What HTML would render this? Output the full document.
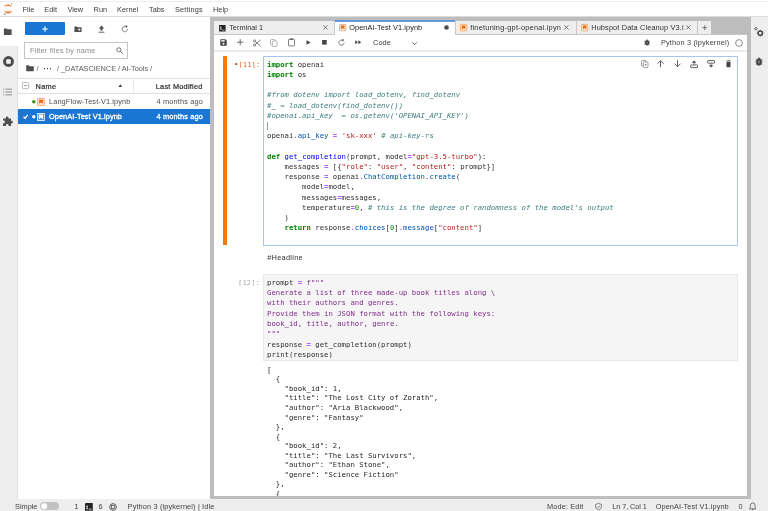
<!DOCTYPE html>
<html lang="en">
<head>
<meta charset="utf-8">
<title>JupyterLab</title>
<style>
*{box-sizing:border-box;margin:0;padding:0}
html,body{width:768px;height:511px;overflow:hidden;background:#fff}
body{position:relative;font-family:"Liberation Sans",sans-serif;font-size:7.35px;color:#212121;line-height:10px}
.a{position:absolute;white-space:pre}
.t{position:absolute;white-space:pre;line-height:10px;height:10px}
svg{position:absolute;overflow:visible}
#w{position:absolute;left:0;top:0;width:768px;height:511px;will-change:transform}
.mono{font-family:"DejaVu Sans Mono","Liberation Mono",monospace;font-size:7.29px}
.code{position:absolute;white-space:pre;font-family:"DejaVu Sans Mono","Liberation Mono",monospace;font-size:14.58px;line-height:20.4px;color:#303030;transform:scale(0.5);transform-origin:0 0}
.out{position:absolute;white-space:pre;font-family:"DejaVu Sans Mono","Liberation Mono",monospace;font-size:14.58px;line-height:19.2px;color:#2a2a2a;transform:scale(0.5);transform-origin:0 0}
.k{color:#008000;font-weight:bold}
.c{color:#408080;font-style:italic}
.s{color:#ba2121}
.o{color:#b660ff;font-weight:bold}
.p{color:#0055aa}
.d{color:#0000ff}
.n{color:#008800}
.f{color:#85308f}
.u{text-shadow:0 0.9px 0 currentColor}
</style>
</head>
<body>
<div id="w">
<!-- top menu bar -->
<div class="a" id="menubar" style="left:-4px;top:-4px;width:776px;height:20.6px;background:#fff;border-bottom:1px solid #dcdcdc"></div><div class="a" style="left:-4px;top:1.2px;width:776px;height:1px;background:#ececec"></div>
<svg style="left:0;top:0" width="17" height="17" viewBox="0 0 17 17">
  <path d="M4.3 7.3 C5.2 3.4 11.2 3.4 12.1 7.3 C10.4 5.7 6 5.7 4.3 7.3Z" fill="#f37726"/>
  <path d="M4.3 10.4 C5.2 14.4 11.2 14.4 12.1 10.4 C10.4 12 6 12 4.3 10.4Z" fill="#f37726"/>
  <circle cx="4.9" cy="14.1" r="0.75" fill="#616262"/>
  <circle cx="11.6" cy="3.8" r="0.6" fill="#767677"/>
  <circle cx="4.4" cy="5" r="0.45" fill="#9e9e9e"/>
</svg>
<span class="t" style="left:22.6px;top:4.6px;color:#3a3a3a">File</span>
<span class="t" style="left:44.3px;top:4.6px;color:#3a3a3a">Edit</span>
<span class="t" style="left:67.4px;top:4.6px;color:#3a3a3a">View</span>
<span class="t" style="left:93.6px;top:4.6px;color:#3a3a3a">Run</span>
<span class="t" style="left:117px;top:4.6px;color:#3a3a3a">Kernel</span>
<span class="t" style="left:149px;top:4.6px;color:#3a3a3a">Tabs</span>
<span class="t" style="left:175px;top:4.6px;color:#3a3a3a;letter-spacing:0.15px">Settings</span>
<span class="t" style="left:213px;top:4.6px;color:#3a3a3a">Help</span>

<!-- left sidebar -->
<div class="a" id="lside" style="left:-4px;top:16.5px;width:21.5px;height:482.5px;background:#eeeeee"></div>
<div class="a" style="left:16.5px;top:46px;width:1px;height:453px;background:#dfdfdf"></div><div class="a" style="left:-4px;top:16.5px;width:22px;height:29.5px;background:#fff"></div>
<svg style="left:3.3px;top:28.1px" width="9.5" height="7.4" viewBox="0 0 10 9"><path d="M0.3 1.2 Q0.3 0.5 1 0.5 H3.6 L4.6 1.6 H9 Q9.7 1.6 9.7 2.3 V7.8 Q9.7 8.5 9 8.5 H1 Q0.3 8.5 0.3 7.8Z" fill="#4f4f4f"/></svg>
<svg style="left:2.6px;top:56.4px" width="11" height="11" viewBox="0 0 11 11"><circle cx="5.5" cy="5.5" r="5.4" fill="#4a4a4a"/><rect x="3.2" y="3.2" width="4.6" height="4.6" rx="0.9" fill="#f4f4f4"/></svg>
<svg style="left:3.3px;top:87.8px" width="9.4" height="8" viewBox="0 0 10 8"><g stroke="#868686" stroke-width="1"><path d="M0.2 1H1.4M2.6 1H9.6M0.2 4H1.4M2.6 4H9.6M0.2 7H1.4M2.6 7H9.6"/></g></svg>
<svg style="left:1.85px;top:115.8px" width="10.5" height="10.5" viewBox="0 0 10 10"><path d="M3.6 1.7 A1.3 1.3 0 0 1 6.2 1.7 V2.4 H8 Q8.6 2.4 8.6 3 V4.6 H9 A1.3 1.3 0 0 1 9 7.2 H8.6 V9 Q8.6 9.6 8 9.6 H6.3 V9 A1.3 1.3 0 0 0 3.7 9 V9.6 H1.6 Q1 9.6 1 9 V7 H1.5 A1.3 1.3 0 0 0 1.5 4.4 H1 V3 Q1 2.4 1.6 2.4 H3.6Z" fill="#4f4f4f"/></svg>

<!-- file browser -->
<div class="a" id="fb" style="left:18px;top:16.5px;width:192px;height:482.5px;background:#fff"></div>
<div class="a" style="left:24.6px;top:22px;width:40px;height:13px;background:#1976d2;border-radius:1px"></div>
<svg style="left:41.6px;top:25.6px" width="6" height="6" viewBox="0 0 6 6"><path d="M3 0.2V5.8M0.2 3H5.8" stroke="#fff" stroke-width="1.1"/></svg>
<svg style="left:73.6px;top:25.5px" width="8" height="6.6" viewBox="0 0 8 7"><path d="M0.2 0.9 Q0.2 0.4 0.7 0.4 H2.8 L3.6 1.3 H7.3 Q7.8 1.3 7.8 1.8 V6 Q7.8 6.5 7.3 6.5 H0.7 Q0.2 6.5 0.2 6Z" fill="#4f4f4f"/><path d="M5.3 2.5V5.3M3.9 3.9H6.7" stroke="#fff" stroke-width="0.8"/></svg>
<svg style="left:97.5px;top:25px" width="7" height="8" viewBox="0 0 7 8"><path d="M3.5 0.4 L6.2 3.4 H4.6 V5.6 H2.4 V3.4 H0.8Z" fill="#4f4f4f"/><path d="M0.6 7.2H6.4" stroke="#4f4f4f" stroke-width="0.9"/></svg>
<svg style="left:120.6px;top:25px" width="8" height="8" viewBox="0 0 8 8"><path d="M6.6 4.2 A2.7 2.7 0 1 1 5.4 1.8" fill="none" stroke="#616161" stroke-width="0.8"/><path d="M4.3 0.2 L6.9 0.9 L5.2 3Z" fill="#616161"/></svg>

<div class="a" style="left:24.2px;top:42px;width:103.6px;height:17px;border:1px solid #c4c4c4;background:#fff"></div>
<span class="t" style="left:30px;top:45.7px;color:#8c8c8c;letter-spacing:0.2px">Filter files by name</span>
<svg style="left:116px;top:47.2px" width="7.4" height="7.4" viewBox="0 0 7 7"><circle cx="2.7" cy="2.7" r="2" fill="none" stroke="#616161" stroke-width="0.8"/><path d="M4.2 4.2L6.5 6.5" stroke="#616161" stroke-width="0.9"/></svg>

<svg style="left:25.8px;top:65.3px" width="8" height="6.5" viewBox="0 0 8 6.5"><path d="M0.2 0.8 Q0.2 0.3 0.7 0.3 H2.8 L3.6 1.2 H7.3 Q7.8 1.2 7.8 1.7 V5.7 Q7.8 6.2 7.3 6.2 H0.7 Q0.2 6.2 0.2 5.7Z" fill="#4f4f4f"/></svg>
<span class="t" style="left:36.5px;top:63.7px;color:#616161">/</span>
<span class="t" style="left:43.6px;top:63.7px;color:#424242;letter-spacing:0.5px;font-weight:bold">···</span>
<span class="t" style="left:57px;top:63.7px;color:#5c5c5c;letter-spacing:-0.02px">/ _DATASCIENCE / AI-Tools /</span>

<div class="a" style="left:18px;top:78px;width:192px;height:15.5px;border-top:1px solid #e0e0e0;border-bottom:1px solid #e0e0e0;background:#fff"></div>
<div class="a" style="left:133px;top:79.5px;width:1px;height:13px;background:#e8e8e8"></div>
<svg style="left:22px;top:82.4px" width="7" height="7" viewBox="0 0 7 7"><rect x="0.4" y="0.4" width="6.2" height="6.2" rx="0.8" fill="#fff" stroke="#9e9e9e" stroke-width="0.7"/><path d="M1.9 3.5H5.1" stroke="#757575" stroke-width="0.7"/></svg>
<span class="t" style="left:35.6px;top:81.7px;color:#2b2b2b;-webkit-text-stroke:0.2px #2b2b2b;letter-spacing:0.3px">Name</span>
<svg style="left:118.2px;top:84.3px" width="4.6" height="3.2" viewBox="0 0 4 3"><path d="M2 0.3L3.8 2.8H0.2Z" fill="#424242"/></svg>
<span class="t" style="left:155.8px;top:81.7px;color:#2b2b2b;-webkit-text-stroke:0.2px #2b2b2b;letter-spacing:0.24px">Last Modified</span>

<!-- row 1 -->
<svg style="left:31.5px;top:99.9px" width="3.6" height="3.6" viewBox="0 0 3 3"><circle cx="1.5" cy="1.5" r="1.4" fill="#2e8b2e"/></svg>
<svg style="left:37px;top:98px" width="7.9" height="7.8" viewBox="0 0 7.6 7.8"><rect x="0.4" y="0.4" width="6.8" height="7" rx="0.5" fill="#fdeadb" stroke="#f28a45" stroke-width="0.7"/><path d="M1.9 1.7H5.7V5.7L3.8 4.6L1.9 5.7Z" fill="#f06a08"/></svg>
<span class="t" style="left:49px;top:97.3px;color:#4d4d4d;letter-spacing:0.12px">LangFlow-Test-V1.ipynb</span>
<span class="t" style="left:156.5px;top:97.3px;color:#4d4d4d;letter-spacing:0.16px">4 months ago</span>
<!-- row 2 -->
<div class="a" style="left:18px;top:109px;width:192px;height:15px;background:#1976d2"></div>
<svg style="left:22.6px;top:114.4px" width="5.4" height="5.2" viewBox="0 0 6.4 6"><path d="M0.7 3.2L2.4 4.9L5.7 0.9" fill="none" stroke="#fff" stroke-width="1.5"/></svg>
<svg style="left:31.5px;top:115.1px" width="3.6" height="3.6" viewBox="0 0 3 3"><circle cx="1.5" cy="1.5" r="1.4" fill="#fff"/></svg>
<svg style="left:37px;top:112.9px" width="7.9" height="7.8" viewBox="0 0 7.6 7.8"><rect x="0.4" y="0.4" width="6.8" height="7" fill="#4a92dc" stroke="#fff" stroke-width="0.8"/><path d="M1.7 1.6H5.9V6.2L3.8 4.7L1.7 6.2Z" fill="#fff"/></svg>
<span class="t" style="left:49px;top:112.1px;color:#fff;-webkit-text-stroke:0.3px #fff;letter-spacing:0.08px">OpenAI-Test V1.ipynb</span>
<span class="t" style="left:156.5px;top:112.1px;color:#fff;-webkit-text-stroke:0.3px #fff;letter-spacing:0.16px">4 months ago</span>

<!-- main dock -->
<div class="a" id="dockbg" style="left:210px;top:16.5px;width:541px;height:482.5px;background:#bdbdbd"></div>
<div class="a" id="dock" style="left:214px;top:34.5px;width:533px;height:462px;background:#fff"></div>
<!-- tabs -->
<div class="a" style="left:214px;top:20.5px;width:121px;height:14px;background:#eeeeee;border-right:1px solid #c8c8c8;border-bottom:1px solid #c8c8c8"></div>
<div class="a" style="left:335px;top:20.5px;width:121px;height:14px;background:#fff;border-right:1px solid #c8c8c8"></div><svg style="left:335px;top:19px" width="120" height="4" viewBox="0 0 120 4"><rect x="0" y="1.3" width="120" height="1.5" fill="#3f87da"/></svg>
<div class="a" style="left:456px;top:20.5px;width:121px;height:14px;background:#eeeeee;border-right:1px solid #c8c8c8;border-bottom:1px solid #c8c8c8"></div>
<div class="a" style="left:577px;top:20.5px;width:121px;height:14px;background:#eeeeee;border-right:1px solid #c8c8c8;border-bottom:1px solid #c8c8c8"></div>
<div class="a" style="left:698px;top:20.5px;width:13px;height:14px;background:#eeeeee;border-bottom:1px solid #c8c8c8"></div>
<div class="a" style="left:711px;top:33.5px;width:36px;height:1px;background:#c8c8c8"></div>

<svg style="left:219.4px;top:24.5px" width="6.7" height="6.5" viewBox="0 0 7 7"><rect x="0" y="0" width="7" height="7" rx="0.4" fill="#222"/><path d="M1.9 1.4V5.6M2.7 2.4Q1.9 1.8 1.2 2.4Q1 3.2 1.9 3.5Q2.8 3.8 2.6 4.6Q1.9 5.2 1.1 4.6" stroke="#fff" stroke-width="0.5" fill="none"/><path d="M3.6 5.5H5.8" stroke="#fff" stroke-width="0.7"/></svg>
<span class="t" style="left:229.2px;top:22.7px;color:#333">Terminal 1</span>
<svg style="left:322.9px;top:25.3px" width="4.8" height="4.8" viewBox="0 0 4.8 4.8"><path d="M0.3 0.3L4.5 4.5M4.5 0.3L0.3 4.5" stroke="#555" stroke-width="0.75"/></svg>

<svg style="left:339.4px;top:23.9px" width="7.3" height="7.2" viewBox="0 0 7.6 7.8"><rect x="0.4" y="0.4" width="6.8" height="7" rx="0.5" fill="#fdeadb" stroke="#f28a45" stroke-width="0.7"/><path d="M1.9 1.7H5.7V5.7L3.8 4.6L1.9 5.7Z" fill="#f06a08"/></svg>
<span class="t" style="left:349.2px;top:22.7px;color:#212121;letter-spacing:0.08px">OpenAI-Test V1.ipynb</span>
<svg style="left:443.6px;top:25.3px" width="5" height="5" viewBox="0 0 5 5"><circle cx="2.5" cy="2.5" r="2.3" fill="#4a4a4a"/></svg>

<svg style="left:460.4px;top:23.9px" width="7.3" height="7.2" viewBox="0 0 7.6 7.8"><rect x="0.4" y="0.4" width="6.8" height="7" rx="0.5" fill="#fdeadb" stroke="#f28a45" stroke-width="0.7"/><path d="M1.9 1.7H5.7V5.7L3.8 4.6L1.9 5.7Z" fill="#f06a08"/></svg>
<span class="t" style="left:470.2px;top:22.7px;color:#333;letter-spacing:0.25px">finetuning-gpt-openai.ipyn</span>
<svg style="left:564.4px;top:25.3px" width="4.8" height="4.8" viewBox="0 0 4.8 4.8"><path d="M0.3 0.3L4.5 4.5M4.5 0.3L0.3 4.5" stroke="#555" stroke-width="0.75"/></svg>

<svg style="left:581.4px;top:23.9px" width="7.3" height="7.2" viewBox="0 0 7.6 7.8"><rect x="0.4" y="0.4" width="6.8" height="7" rx="0.5" fill="#fdeadb" stroke="#f28a45" stroke-width="0.7"/><path d="M1.9 1.7H5.7V5.7L3.8 4.6L1.9 5.7Z" fill="#f06a08"/></svg>
<span class="t" style="left:591.2px;top:22.7px;color:#333;letter-spacing:0.14px">Hubspot Data Cleanup V3.i</span>
<svg style="left:685.6px;top:25.3px" width="4.8" height="4.8" viewBox="0 0 4.8 4.8"><path d="M0.3 0.3L4.5 4.5M4.5 0.3L0.3 4.5" stroke="#555" stroke-width="0.75"/></svg>
<svg style="left:701.8px;top:24.8px" width="5.4" height="5.4" viewBox="0 0 6 6"><path d="M3 0.2V5.8M0.2 3H5.8" stroke="#555" stroke-width="0.8"/></svg>

<!-- notebook toolbar -->
<div class="a" style="left:214px;top:35px;width:533px;height:16px;background:#fff"></div><div class="a" style="left:214px;top:50px;width:533px;height:1px;background:#d8d8d8;transform:translateY(0.45px)"></div>
<svg style="left:220.2px;top:39px" width="7" height="7" viewBox="0 0 7 7"><path d="M0.3 0.9Q0.3 0.3 0.9 0.3H5.4L6.7 1.6V6.1Q6.7 6.7 6.1 6.7H0.9Q0.3 6.7 0.3 6.1Z" fill="#424242"/><rect x="1.3" y="1.1" width="3.4" height="1.5" fill="#fff"/><circle cx="3.5" cy="4.7" r="1" fill="#fff"/></svg>
<svg style="left:237.3px;top:39.4px" width="6.4" height="6.4" viewBox="0 0 6 6"><path d="M3 0.1V5.9M0.1 3H5.9" stroke="#555" stroke-width="0.8"/></svg>
<svg style="left:253.2px;top:38.5px" width="8" height="8" viewBox="0 0 8 8"><path d="M2.4 2.6L7.6 7.2M2.4 5.4L7.6 0.8" stroke="#616161" stroke-width="0.8" fill="none"/><circle cx="1.6" cy="1.9" r="1.1" fill="none" stroke="#616161" stroke-width="0.8"/><circle cx="1.6" cy="6.1" r="1.1" fill="none" stroke="#616161" stroke-width="0.8"/></svg>
<svg style="left:270.3px;top:38.8px" width="7.6" height="8" viewBox="0 0 7.6 8"><rect x="0.5" y="0.5" width="4.4" height="5.6" rx="0.9" fill="none" stroke="#9a9a9a" stroke-width="0.7"/><rect x="2.4" y="1.9" width="4.6" height="5.7" rx="0.9" fill="#fff" stroke="#9a9a9a" stroke-width="0.7"/></svg>
<svg style="left:287.8px;top:38.2px" width="7" height="8.4" viewBox="0 0 7 8.4"><rect x="0.5" y="1.3" width="6" height="6.6" rx="0.6" fill="none" stroke="#616161" stroke-width="0.8"/><rect x="2.2" y="0.3" width="2.6" height="1.7" fill="#616161"/></svg>
<svg style="left:306px;top:40px" width="5" height="5" viewBox="0 0 5 5"><path d="M0.5 0.2L4.6 2.5L0.5 4.8Z" fill="#424242"/></svg>
<svg style="left:322.2px;top:40.2px" width="4.8" height="4.6" viewBox="0 0 4.4 4.4"><rect width="4.4" height="4.4" fill="#424242"/></svg>
<svg style="left:337.9px;top:38.9px" width="7.2" height="7.2" viewBox="0 0 7 7"><path d="M5.9 3.7A2.5 2.5 0 1 1 4.8 1.5" fill="none" stroke="#616161" stroke-width="0.8"/><path d="M3.8 0L6.2 0.7L4.6 2.6Z" fill="#616161"/></svg>
<svg style="left:355.4px;top:40.3px" width="6.5" height="4.4" viewBox="0 0 6.5 4.4"><path d="M0.2 0.2L3 2.2L0.2 4.2ZM3.4 0.2L6.2 2.2L3.4 4.2Z" fill="#424242"/></svg>
<span class="t" style="left:373px;top:37.7px;color:#3a3a3a;letter-spacing:0.1px">Code</span>
<svg style="left:411.6px;top:41.6px" width="5.2" height="3.2" viewBox="0 0 5 3"><path d="M0.4 0.4L2.5 2.5L4.6 0.4" fill="none" stroke="#555" stroke-width="0.9"/></svg>

<svg style="left:644.4px;top:39.3px" width="6.2" height="7" viewBox="0 0 8 9"><path d="M0.6 2.6L2 3.4M7.4 2.6L6 3.4M0.3 4.9H1.8M7.7 4.9H6.2M0.6 7.4L2 6.4M7.4 7.4L6 6.4" stroke="#424242" stroke-width="0.9"/><ellipse cx="4" cy="4.9" rx="2.7" ry="3.6" fill="#424242"/><path d="M2.6 1.4Q4 -0.4 5.4 1.4Z" fill="#424242"/><rect x="3.3" y="3.6" width="1.4" height="2.6" rx="0.6" fill="#8a8a8a"/></svg>
<span class="t" style="left:661px;top:37.7px;color:#424242;letter-spacing:0.15px">Python 3 (ipykernel)</span>
<svg style="left:735px;top:38.6px" width="8" height="8" viewBox="0 0 8 8"><circle cx="4" cy="4" r="3.4" fill="none" stroke="#616161" stroke-width="0.7"/></svg>

<!-- cell 1 -->
<div class="a" style="left:222.8px;top:56.3px;width:4.4px;height:188.9px;background:#f57c00;border-radius:0.5px"></div>
<span class="code" style="left:233.7px;top:59.4px;line-height:20.45px;color:#e2652a"><span style="color:#d03a1a">•</span>[11]:</span>
<div class="a" style="left:263px;top:56.2px;width:475.4px;height:189.6px;border:1px solid #a9c6ea;background:#fff"></div>
<div class="code" style="left:267.2px;top:59.4px;line-height:20.45px"><span class="k">import</span> openai
<span class="k">import</span> os

<span class="c">#from dotenv import load<span class="u">_</span>dotenv, find<span class="u">_</span>dotenv</span>
<span class="c">#<span class="u">_</span> = load<span class="u">_</span>dotenv(find<span class="u">_</span>dotenv())</span>
<span class="c">#openai.api<span class="u">_</span>key  = os.getenv('OPENAI<span class="u">_</span>API<span class="u">_</span>KEY')</span>

openai<span class="o">.</span><span class="p">api<span class="u">_</span>key</span> <span class="o">=</span> <span class="s">'sk-xxx'</span> <span class="c"># api-key-rs</span>

<span class="k">def</span> <span class="d">get<span class="u">_</span>completion</span>(prompt, model<span class="o">=</span><span class="s">"gpt-3.5-turbo"</span>):
    messages <span class="o">=</span> [{<span class="s">"role"</span>: <span class="s">"user"</span>, <span class="s">"content"</span>: prompt}]
    response <span class="o">=</span> openai<span class="o">.</span><span class="p">ChatCompletion</span><span class="o">.</span><span class="p">create</span>(
        model<span class="o">=</span>model,
        messages<span class="o">=</span>messages,
        temperature<span class="o">=</span><span class="n">0</span>, <span class="c"># this is the degree of randomness of the model's output</span>
    )
    <span class="k">return</span> response<span class="o">.</span><span class="p">choices</span>[<span class="n">0</span>]<span class="o">.</span><span class="p">message</span>[<span class="s">"content"</span>]</div>
<div class="a" style="left:266.6px;top:121.8px;width:1px;height:8.6px;background:#9a9a9a"></div>

<!-- cell toolbar -->
<svg style="left:640.6px;top:60px" width="7.6" height="8" viewBox="0 0 7.6 8"><rect x="0.5" y="0.5" width="4.4" height="5.6" rx="0.9" fill="none" stroke="#757575" stroke-width="0.7"/><rect x="2.4" y="1.9" width="4.6" height="5.7" rx="0.9" fill="#fff" stroke="#757575" stroke-width="0.7"/><path d="M4.7 3.6V5.8M3.6 4.7H5.8" stroke="#757575" stroke-width="0.6"/></svg>
<svg style="left:657.3px;top:60.3px" width="7" height="7.4" viewBox="0 0 7 7.4"><path d="M3.5 7.2V0.8M0.5 3.7L3.5 0.7L6.5 3.7" fill="none" stroke="#555" stroke-width="0.95"/></svg>
<svg style="left:674.3px;top:60.3px" width="7" height="7.4" viewBox="0 0 7 7.4"><path d="M3.5 0.2V6.6M0.5 3.7L3.5 6.7L6.5 3.7" fill="none" stroke="#555" stroke-width="0.95"/></svg>
<svg style="left:690.4px;top:60px" width="8.2" height="8" viewBox="0 0 7.4 7.4"><rect x="0.5" y="4.6" width="6.4" height="2.4" rx="0.5" fill="none" stroke="#555" stroke-width="0.85"/><path d="M3.7 4.4V1.2M2.2 2.4L3.7 0.8L5.2 2.4Z" fill="#555" stroke="#555" stroke-width="0.7"/></svg>
<svg style="left:707.2px;top:60.2px" width="8.2" height="8" viewBox="0 0 7.4 7.4"><rect x="0.5" y="0.5" width="6.4" height="2.4" rx="0.5" fill="none" stroke="#555" stroke-width="0.85"/><path d="M3.7 3V6.2M2.2 5L3.7 6.6L5.2 5Z" fill="#555" stroke="#555" stroke-width="0.7"/></svg>
<svg style="left:725.5px;top:60.3px" width="5" height="7.4" viewBox="0 0 5 7.4"><path d="M0.5 1.9H4.5V6.6Q4.5 7.2 3.9 7.2H1.1Q0.5 7.2 0.5 6.6Z" fill="#424242"/><path d="M0.1 1H4.9M1.7 0.4H3.3" stroke="#424242" stroke-width="0.7"/></svg>

<!-- markdown cell -->
<span class="t" style="left:267.2px;top:253.3px;color:#333;font-size:7.35px;letter-spacing:0.3px">#Headline</span>

<!-- cell 2 -->
<span class="code" style="left:237.9px;top:277.45px;line-height:20.6px;color:#a6a6a6">[12]:</span>
<div class="a" style="left:263px;top:273.8px;width:475.4px;height:86.9px;border:1px solid #e8e8e8;background:#f5f5f5"></div>
<div class="code" style="left:267.2px;top:277.45px;line-height:20.6px">prompt <span class="o">=</span> <span class="f">f"""</span>
<span class="f">Generate a list of three made-up book titles along \</span>
<span class="f">with their authors and genres.</span>
<span class="f">Provide them in JSON format with the following keys:</span>
<span class="f">book<span class="u">_</span>id, title, author, genre.</span>
<span class="f">"""</span>
response <span class="o">=</span> get<span class="u">_</span>completion(prompt)
print(response)</div>

<!-- output -->
<div class="out" style="left:267.2px;top:364.3px;line-height:19.11px">[
  {
    "book<span class="u">_</span>id": 1,
    "title": "The Lost City of Zorath",
    "author": "Aria Blackwood",
    "genre": "Fantasy"
  },
  {
    "book<span class="u">_</span>id": 2,
    "title": "The Last Survivors",
    "author": "Ethan Stone",
    "genre": "Science Fiction"
  },
  {</div>
<div class="a" style="left:214px;top:496.3px;width:537px;height:2.7px;background:#bdbdbd"></div>

<!-- right sidebar -->
<div class="a" id="rside" style="left:751px;top:16.5px;width:21px;height:482.5px;background:#eeeeee"></div>
<svg style="left:754.3px;top:26.2px" width="11" height="11" viewBox="0 0 11 11"><circle cx="1.9" cy="2.7" r="1.2" fill="none" stroke="#424242" stroke-width="0.8"/><circle cx="6.2" cy="7.15" r="2.1" fill="none" stroke="#424242" stroke-width="1.3"/><path d="M8.20 7.15L9.45 7.15M7.61 8.56L8.50 9.45M6.20 9.15L6.20 10.40M4.79 8.56L3.90 9.45M4.20 7.15L2.95 7.15M4.79 5.74L3.90 4.85M6.20 5.15L6.20 3.90M7.61 5.74L8.50 4.85" stroke="#424242" stroke-width="1.2"/></svg>
<svg style="left:755.2px;top:57.3px" width="8" height="9" viewBox="0 0 8 9"><path d="M0.6 2.6L2 3.4M7.4 2.6L6 3.4M0.3 4.9H1.8M7.7 4.9H6.2M0.6 7.4L2 6.4M7.4 7.4L6 6.4" stroke="#424242" stroke-width="0.8"/><ellipse cx="4" cy="4.9" rx="2.7" ry="3.6" fill="#424242"/><path d="M2.6 1.4Q4 -0.4 5.4 1.4Z" fill="#424242"/><rect x="3.2" y="3.4" width="1.6" height="3" rx="0.7" fill="#8a8a8a"/></svg>

<!-- status bar -->
<div class="a" id="status" style="left:-4px;top:499px;width:776px;height:16px;background:#eeeeee"></div>
<span class="t" style="left:15px;top:501.5px;color:#424242">Simple</span>
<div class="a" style="left:40.4px;top:502.4px;width:19px;height:8px;border-radius:4px;background:#c2c2c2"></div>
<svg style="left:41.4px;top:503.2px" width="6.4" height="6.4" viewBox="0 0 6.4 6.4"><circle cx="3.2" cy="3.2" r="3" fill="#fff"/></svg>
<span class="t" style="left:74.5px;top:501.5px;color:#424242">1</span>
<svg style="left:85px;top:503.1px" width="7.8" height="7.9" viewBox="0 0 7 7"><rect x="0" y="0" width="7" height="7" rx="0.4" fill="#222"/><path d="M1.9 2.2V5.6M2.7 2.9Q1.9 2.3 1.2 2.9Q1 3.6 1.9 3.9Q2.8 4.2 2.6 4.9Q1.9 5.5 1.1 4.9" stroke="#fff" stroke-width="0.5" fill="none"/><path d="M3.6 5.5H5.8" stroke="#fff" stroke-width="0.7"/></svg>
<span class="t" style="left:98.5px;top:501.5px;color:#424242">6</span>
<svg style="left:109px;top:502.6px" width="8" height="8" viewBox="0 0 8 8"><circle cx="4" cy="4" r="3.3" fill="none" stroke="#4a4a4a" stroke-width="0.8"/><rect x="2.6" y="2.6" width="2.8" height="2.8" fill="none" stroke="#4a4a4a" stroke-width="0.7"/><path d="M4 0V1.2M4 6.8V8M0 4H1.2M6.8 4H8" stroke="#4a4a4a" stroke-width="0.6"/></svg>
<span class="t" style="left:127.6px;top:501.5px;color:#424242;letter-spacing:0.14px">Python 3 (ipykernel) | Idle</span>

<span class="t" style="left:547px;top:501.5px;color:#424242;letter-spacing:0.14px">Mode: Edit</span>
<svg style="left:594.5px;top:502.8px" width="7" height="7.4" viewBox="0 0 7 7.4"><path d="M3.5 0.4L6.5 1.5V3.6Q6.5 5.9 3.5 7Q0.5 5.9 0.5 3.6V1.5Z" fill="none" stroke="#555" stroke-width="0.7"/><path d="M2 3.6L3.1 4.7L5 2.6" fill="none" stroke="#555" stroke-width="0.7"/></svg>
<span class="t" style="left:612.3px;top:501.5px;color:#424242;letter-spacing:-0.1px">Ln 7, Col 1</span>
<span class="t" style="left:655.7px;top:501.5px;color:#424242;letter-spacing:0.08px">OpenAI-Test V1.ipynb</span>
<span class="t" style="left:738.5px;top:501.5px;color:#424242">0</span>
<svg style="left:748.5px;top:502.3px" width="7.4" height="8.2" viewBox="0 0 7.4 8.2"><path d="M1.3 6.2V3.5Q1.3 1 3.7 0.9Q6.1 1 6.1 3.5V6.2L6.9 6.9H0.5Z" fill="none" stroke="#424242" stroke-width="0.7"/><path d="M3 7.5H4.4" stroke="#424242" stroke-width="0.8"/></svg>
</div>
</body>
</html>
